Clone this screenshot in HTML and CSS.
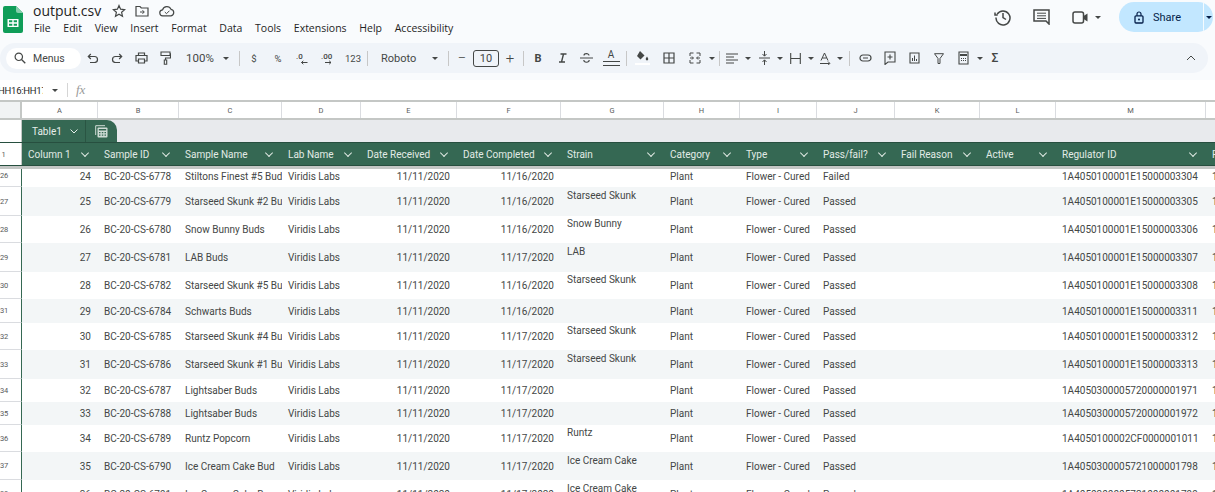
FILE: index.html
```html
<!DOCTYPE html>
<html lang="en">
<head>
<meta charset="UTF-8" />
<title>output.csv - Google Sheets</title>
<link rel="stylesheet" href="styles.css">
</head>
<body>
  <header class="topbar">
    <svg class="logo" width="20" height="27" viewBox="0 0 20 27"><path d="M2 0h11l7 7v18a2 2 0 0 1-2 2H2a2 2 0 0 1-2-2V2a2 2 0 0 1 2-2z" fill="#0f9d58"/><path d="M13 0l7 7h-5a2 2 0 0 1-2-2z" fill="#87ceac"/><path d="M4.500 13h11v8h-11z M6 14.300v2h3.300v-2z M10.700 14.300v2H14v-2z M6 17.700v2h3.300v-2z M10.700 17.700v2H14v-2z" fill="#fff" fill-rule="evenodd"/></svg>
    <div class="doc">
      <div class="doc-title">
        <span class="doc-name">output.csv</span>
        <svg class="ic-star" width="14" height="14" viewBox="0 0 14 14"><path d="M7 1.500l1.600 3.700 4 .4-3 2.700.9 4L7 10.200l-3.500 2.100.9-4-3-2.700 4-.4z" fill="none" stroke="#444746" stroke-width="1.200"/></svg>
        <svg class="ic-move" width="14" height="12" viewBox="0 0 14 12"><path d="M1 1.500h4l1.300 1.500H13v8H1z" fill="none" stroke="#444746" stroke-width="1.200"/><path d="M5 7h4M7.500 5.200L9.300 7 7.500 8.800" fill="none" stroke="#444746"/></svg>
        <svg class="ic-cloud" width="16" height="12" viewBox="0 0 16 12"><path d="M4 10.800a3 3 0 0 1-.4-6A4.500 4.500 0 0 1 12 4.300a3.300 3.300 0 0 1 0 6.500z" fill="none" stroke="#444746" stroke-width="1.200"/><path d="M5.800 7l1.700 1.700 3-3" fill="none" stroke="#444746"/></svg>
      </div>
      <nav class="menu">
        <span>File</span><span>Edit</span><span>View</span><span>Insert</span><span>Format</span><span>Data</span><span>Tools</span><span>Extensions</span><span>Help</span><span>Accessibility</span>
      </nav>
    </div>
    <div class="top-actions">
      <svg class="ic-history" width="18" height="18" viewBox="0 0 18 18"><path d="M3.200 6A7 7 0 1 1 2 9.500M1 4.500V7h2.700" fill="none" stroke="#444746" stroke-width="1.500"/><path d="M9 5v4.500l3 2" fill="none" stroke="#444746" stroke-width="1.500"/></svg>
      <svg class="ic-chat" width="17" height="16" viewBox="0 0 17 16"><path d="M1 1h15v14l-3-3H1z" fill="none" stroke="#444746" stroke-width="1.500"/><path d="M4 4.200h9M4 6.800h9M4 9.400h9" stroke="#444746"/></svg>
      <svg class="ic-video" width="17" height="13" viewBox="0 0 17 13"><rect x="1" y="1" width="10.500" height="11" rx="2" fill="none" stroke="#444746" stroke-width="1.500"/><path d="M11.500 5l4-2.500v8l-4-2.500z" fill="#444746"/></svg>
      <i class="caret ic-video-caret"></i>
      <div class="share">
        <div class="share-main">
          <svg width="10" height="13" viewBox="0 0 10 13"><rect x="1" y="4.800" width="8" height="7.200" rx="1" fill="none" stroke="#041e49" stroke-width="1.300"/><path d="M3 4.800V3a2 2 0 0 1 4 0v1.800" fill="none" stroke="#041e49" stroke-width="1.200"/><circle cx="5" cy="8.400" r="1" fill="#041e49"/></svg>
          <span>Share</span>
        </div>
        <div class="share-more"><i class="caret dark"></i></div>
      </div>
    </div>
  </header>

  <div class="toolbar">
    <div class="search">
      <svg width="12" height="12" viewBox="0 0 12 12"><circle cx="4.800" cy="4.800" r="3.700" fill="none" stroke="#444746" stroke-width="1.200"/><path d="M7.500 7.500L11.300 11.300" stroke="#444746" stroke-width="1.300"/></svg>
      <span>Menus</span>
    </div>
    <button class="tb w24"><svg width="12" height="10" viewBox="0 0 12 10"><path d="M1.500 3.500h6a3 3 0 0 1 0 6H3M3.800 1L1.300 3.500 3.800 6" fill="none" stroke="#444746" stroke-width="1.200"/></svg></button>
    <button class="tb w24"><svg width="12" height="10" viewBox="0 0 12 10"><path d="M10.500 3.500h-6a3 3 0 0 0 0 6H9M8.200 1l2.500 2.500L8.200 6" fill="none" stroke="#444746" stroke-width="1.200"/></svg></button>
    <button class="tb w24"><svg width="13" height="12" viewBox="0 0 13 12"><path d="M3.500 3.500V1h6v2.500M3.500 9H1V3.500h11V9H9.500M3.500 7h6v4h-6z" fill="none" stroke="#444746" stroke-width="1.200"/></svg></button>
    <button class="tb w24"><svg width="11" height="14" viewBox="0 0 11 14"><path d="M1 1h9v3.500H1zM10 2.800h.5V7H5.500v2M4.300 9h2.400v4.300H4.300z" fill="none" stroke="#444746" stroke-width="1.100"/></svg></button>
    <span class="tb-text zoom">100%</span>
    <i class="caret slot22"></i>
    <i class="sep"></i>
    <button class="tb w24 glyph">$</button>
    <button class="tb w24 glyph">%</button>
    <button class="tb w24"><svg width="13" height="13" viewBox="0 0 13 13"><text x="0" y="7" class="svg-num">.0</text><path d="M11.500 10.500H5.500M7.300 8.800l-1.800 1.700 1.800 1.700" fill="none" stroke="#444746"/></svg></button>
    <button class="tb w27"><svg width="14" height="13" viewBox="0 0 14 13"><text x="0" y="7" class="svg-num">.00</text><path d="M4 10.500h6M8.200 8.800l1.800 1.700-1.800 1.700" fill="none" stroke="#444746"/></svg></button>
    <button class="tb w24 glyph">123</button>
    <i class="sep"></i>
    <span class="tb-text font">Roboto</span>
    <i class="caret slot22"></i>
    <i class="sep"></i>
    <button class="tb w22 big">&minus;</button>
    <span class="size">10</span>
    <button class="tb w22 big">+</button>
    <i class="sep"></i>
    <button class="tb w24 bold">B</button>
    <button class="tb w24"><svg width="9" height="10" viewBox="0 0 9 10"><path d="M2.500 1H8.500M1 9h6M5.500 1L3.500 9" fill="none" stroke="#444746" stroke-width="1.400"/></svg></button>
    <button class="tb w24"><svg width="13" height="12" viewBox="0 0 13 12"><path d="M0 6h13" stroke="#444746"/><path d="M9 3.500C9 1 4 1 4 3.500M3.800 8c0 3 5.400 3 5.400 0" fill="none" stroke="#444746" stroke-width="1.100"/></svg></button>
    <button class="tb w26 color-a"><span>A</span><i></i></button>
    <i class="sep"></i>
    <button class="tb w26"><svg width="15" height="16" viewBox="0 0 15 16"><path d="M5 1l4.500 4.500L5.500 9.500 2 6z" fill="#444746"/><path d="M12 6.500c-1 1.500-1.300 2-1.300 2.600a1.300 1.300 0 0 0 2.600 0c0-.6-.3-1.100-1.300-2.600z" fill="#444746"/><path d="M0 13h15v2H0z" fill="#fff"/></svg></button>
    <button class="tb w28"><svg width="12" height="12" viewBox="0 0 12 12"><path d="M1 1h10v10H1zM6 1v10M1 6h10" fill="none" stroke="#444746" stroke-width="1.200"/></svg></button>
    <button class="tb w24"><svg width="12" height="12" viewBox="0 0 12 12"><path d="M4.500 1H1v3M1 8v3h3.500M7.500 1H11v3M11 8v3H7.500M1 6h3M3 4.500L4.500 6 3 7.500M11 6H8M9 4.500L7.500 6 9 7.500" fill="none" stroke="#444746"/></svg></button>
    <i class="caret slot10"></i>
    <i class="sep"></i>
    <button class="tb w20"><svg width="12" height="11" viewBox="0 0 12 11"><path d="M0 1h12M0 4h8M0 7h12M0 10h8" stroke="#444746" stroke-width="1.200"/></svg></button>
    <i class="caret slot12"></i>
    <button class="tb w20"><svg width="11" height="14" viewBox="0 0 11 14"><path d="M0 7h11M5.500 0v5M5.500 9v5M3.500 3l2 2.200 2-2.200M3.500 11l2-2.200 2 2.200" fill="none" stroke="#444746"/></svg></button>
    <i class="caret slot12"></i>
    <button class="tb w18"><svg width="11" height="11" viewBox="0 0 11 11"><path d="M.7 0v11M10.300 0v11M1 5.500h9" fill="none" stroke="#444746" stroke-width="1.100"/></svg></button>
    <i class="caret slot14"></i>
    <button class="tb w15"><svg width="12" height="13" viewBox="0 0 12 13"><path d="M1 8.500L4.500 1 8 8.500M2.300 6h4.400M0 11.500h9M8 9.500l2 2-2 1" fill="none" stroke="#444746"/></svg></button>
    <i class="caret slot14"></i>
    <i class="sep"></i>
    <button class="tb w26"><svg width="13" height="8" viewBox="0 0 13 8"><rect x="1" y="1" width="11" height="6" rx="3" fill="none" stroke="#444746" stroke-width="1.200"/><path d="M4 4h5" stroke="#444746"/></svg></button>
    <button class="tb w24"><svg width="12" height="14" viewBox="0 0 12 14"><path d="M1 1h10v10H4l-3 2.500zM6 3.500v5M3.500 6h5" fill="none" stroke="#444746" stroke-width="1.100"/></svg></button>
    <button class="tb w25"><svg width="11" height="12" viewBox="0 0 11 12"><path d="M1 1h9v10H1z" fill="none" stroke="#444746" stroke-width="1.100"/><path d="M3.500 9V6M5.500 9V3.500M7.500 9V7" stroke="#444746"/></svg></button>
    <button class="tb w24"><svg width="10" height="11" viewBox="0 0 10 11"><path d="M.5 .7h9L6 5.500V10.500H4V5.500z" fill="none" stroke="#444746"/></svg></button>
    <button class="tb w25"><svg width="11" height="14" viewBox="0 0 11 14"><path d="M1 1h9v12H1z" fill="none" stroke="#444746" stroke-width="1.100"/><path d="M2 3h7v2H2zM3 7h1v1H3zM5 7h1v1H5zM7 7h1v1H7zM3 9h1v1H3zM5 9h1v1H5zM7 9h1v1H7z" fill="#444746"/></svg></button>
    <i class="caret slot8"></i>
    <button class="tb w22 sigma">&Sigma;</button>
    <button class="tb collapse"><svg width="10" height="6" viewBox="0 0 10 6"><path d="M1 5l4-4 4 4" fill="none" stroke="#444746"/></svg></button>
  </div>

  <div class="formula">
    <div class="namebox"><span>HH16:HH17</span></div>
    <i class="caret namecaret"></i>
    <i class="fx-sep"></i>
    <span class="fx">fx</span>
  </div>

  <main class="sheet">
    <div class="row col-heads">
      <div class="corner"></div>
      <div>A</div><div>B</div><div>C</div><div>D</div><div>E</div><div>F</div><div>G</div><div>H</div><div>I</div><div>J</div><div>K</div><div>L</div><div>M</div><div></div>
    </div>
    <div class="tab-row">
      <div class="num"></div>
      <div class="table-tab">
        <span class="tab-name">Table1 <svg class="chev" width="8" height="5" viewBox="0 0 8 5"><path d="M.5 .5L4 4 7.500 .5"/></svg></span>
        <span class="tab-view"><svg width="13" height="13" viewBox="0 0 13 13"><path d="M.7 10V.7H10" fill="none" stroke="#cfdcd6"/><rect x="2.500" y="2.500" width="10" height="10" rx="1" fill="#cfdcd6"/><path d="M3.800 4h7.400v1.500H3.800z" fill="#356853"/><path d="M4 7h1.500v1.200H4zM6.800 7h1.500v1.200H6.800zM9.500 7H11v1.200H9.500zM4 9.500h1.500v1.200H4zM6.800 9.500h1.500v1.200H6.800zM9.500 9.500H11v1.200H9.500z" fill="#356853"/></svg></span>
      </div>
    </div>
    <div class="row table-head">
      <div class="num">1</div>
      <div>Column 1</div><div>Sample ID</div><div>Sample Name</div><div>Lab Name</div><div>Date Received</div><div>Date Completed</div><div>Strain</div><div>Category</div><div>Type</div><div>Pass/fail?</div><div>Fail Reason</div><div>Active</div><div>Regulator ID</div><div>R</div>
    </div>
    <div class="frozen"></div>

    <div class="row data h18"><div class="num">26</div><div class="r">24</div><div>BC-20-CS-6778</div><div>Stiltons Finest #5 Bud</div><div>Viridis Labs</div><div class="r">11/11/2020</div><div class="r">11/16/2020</div><div></div><div>Plant</div><div>Flower - Cured</div><div>Failed</div><div></div><div></div><div>1A4050100001E15000003304</div><div>1</div></div>
    <div class="row data alt h29"><div class="num">27</div><div class="r">25</div><div>BC-20-CS-6779</div><div>Starseed Skunk #2 Bu</div><div>Viridis Labs</div><div class="r">11/11/2020</div><div class="r">11/16/2020</div><div class="wrap">Starseed Skunk</div><div>Plant</div><div>Flower - Cured</div><div>Passed</div><div></div><div></div><div>1A4050100001E15000003305</div><div>1</div></div>
    <div class="row data h27"><div class="num">28</div><div class="r">26</div><div>BC-20-CS-6780</div><div>Snow Bunny Buds</div><div>Viridis Labs</div><div class="r">11/11/2020</div><div class="r">11/16/2020</div><div class="wrap">Snow Bunny</div><div>Plant</div><div>Flower - Cured</div><div>Passed</div><div></div><div></div><div>1A4050100001E15000003306</div><div>1</div></div>
    <div class="row data alt h29"><div class="num">29</div><div class="r">27</div><div>BC-20-CS-6781</div><div>LAB Buds</div><div>Viridis Labs</div><div class="r">11/11/2020</div><div class="r">11/17/2020</div><div class="wrap">LAB</div><div>Plant</div><div>Flower - Cured</div><div>Passed</div><div></div><div></div><div>1A4050100001E15000003307</div><div>1</div></div>
    <div class="row data h27"><div class="num">30</div><div class="r">28</div><div>BC-20-CS-6782</div><div>Starseed Skunk #5 Bu</div><div>Viridis Labs</div><div class="r">11/11/2020</div><div class="r">11/16/2020</div><div class="wrap">Starseed Skunk</div><div>Plant</div><div>Flower - Cured</div><div>Passed</div><div></div><div></div><div>1A4050100001E15000003308</div><div>1</div></div>
    <div class="row data alt h24"><div class="num">31</div><div class="r">29</div><div>BC-20-CS-6784</div><div>Schwarts Buds</div><div>Viridis Labs</div><div class="r">11/11/2020</div><div class="r">11/16/2020</div><div></div><div>Plant</div><div>Flower - Cured</div><div>Passed</div><div></div><div></div><div>1A4050100001E15000003311</div><div>1</div></div>
    <div class="row data h27"><div class="num">32</div><div class="r">30</div><div>BC-20-CS-6785</div><div>Starseed Skunk #4 Bu</div><div>Viridis Labs</div><div class="r">11/11/2020</div><div class="r">11/17/2020</div><div class="wrap">Starseed Skunk</div><div>Plant</div><div>Flower - Cured</div><div>Passed</div><div></div><div></div><div>1A4050100001E15000003312</div><div>1</div></div>
    <div class="row data alt h29"><div class="num">33</div><div class="r">31</div><div>BC-20-CS-6786</div><div>Starseed Skunk #1 Bu</div><div>Viridis Labs</div><div class="r">11/11/2020</div><div class="r">11/17/2020</div><div class="wrap">Starseed Skunk</div><div>Plant</div><div>Flower - Cured</div><div>Passed</div><div></div><div></div><div>1A4050100001E15000003313</div><div>1</div></div>
    <div class="row data h23"><div class="num">34</div><div class="r">32</div><div>BC-20-CS-6787</div><div>Lightsaber Buds</div><div>Viridis Labs</div><div class="r">11/11/2020</div><div class="r">11/17/2020</div><div></div><div>Plant</div><div>Flower - Cured</div><div>Passed</div><div></div><div></div><div>1A4050300005720000001971</div><div>1</div></div>
    <div class="row data alt h23"><div class="num">35</div><div class="r">33</div><div>BC-20-CS-6788</div><div>Lightsaber Buds</div><div>Viridis Labs</div><div class="r">11/11/2020</div><div class="r">11/17/2020</div><div></div><div>Plant</div><div>Flower - Cured</div><div>Passed</div><div></div><div></div><div>1A4050300005720000001972</div><div>1</div></div>
    <div class="row data h27"><div class="num">36</div><div class="r">34</div><div>BC-20-CS-6789</div><div>Runtz Popcorn</div><div>Viridis Labs</div><div class="r">11/11/2020</div><div class="r">11/17/2020</div><div class="wrap">Runtz</div><div>Plant</div><div>Flower - Cured</div><div>Passed</div><div></div><div></div><div>1A4050100002CF0000001011</div><div>1</div></div>
    <div class="row data alt h28"><div class="num">37</div><div class="r">35</div><div>BC-20-CS-6790</div><div>Ice Cream Cake Bud</div><div>Viridis Labs</div><div class="r">11/11/2020</div><div class="r">11/17/2020</div><div class="wrap">Ice Cream Cake</div><div>Plant</div><div>Flower - Cured</div><div>Passed</div><div></div><div></div><div>1A4050300005721000001798</div><div>1</div></div>
    <div class="row data h28"><div class="num">38</div><div class="r">36</div><div>BC-20-CS-6791</div><div>Ice Cream Cake Bu</div><div>Viridis Labs</div><div class="r">11/11/2020</div><div class="r">11/17/2020</div><div class="wrap">Ice Cream Cake</div><div>Plant</div><div>Flower - Cured</div><div>Passed</div><div></div><div></div><div>1A4050300005721000001799</div><div>1</div></div>
  </main>
</body>
</html>
```

FILE: styles.css
```css
html, body {
  margin: 0;
  height: 100%;
  overflow: hidden;
}
body {
  width: 1215px;
  height: 492px;
  background-color: #f9fbfd;
  color: #444746;
  font-family: "Roboto", "Liberation Sans", sans-serif;
  font-size: 10px;
}
svg { display: block; flex: none; }

/* Top bar */
.topbar {
  height: 43px;
  display: flex;
  box-sizing: border-box;
}
.logo {
  margin: 6px 0 0 3px;
}
.doc {
  margin-left: 10px;
}
.doc-title {
  height: 21px;
  display: flex;
  align-items: center;
}
.doc-name {
  font-family: "Open Sans", sans-serif;
  font-size: 14px;
  color: #1f1f1f;
  width: 79px;
}
.ic-move { margin-left: 9px; }
.ic-cloud { margin-left: 10px; }
.menu {
  display: flex;
  gap: 12.7px;
  margin-left: 1px;
  font-family: "Open Sans", sans-serif;
  font-size: 10.5px;
  color: #1f1f1f;
  line-height: 14px;
}
.top-actions {
  margin-left: auto;
  display: flex;
  align-items: center;
  height: 34px;
}
.ic-chat { margin-left: 21px; }
.ic-video { margin-left: 22px; }
.ic-video-caret { margin-left: 6px; }
.share {
  margin: 0 2px 0 18px;
  display: flex;
  width: 94px;
  height: 30px;
  border-radius: 15px;
  background-color: #c2e7ff;
  color: #041e49;
  font-size: 11px;
  overflow: hidden;
}
.share-main {
  width: 69px;
  padding-left: 15px;
  display: flex;
  align-items: center;
  gap: 9px;
  border-right: 1px solid #f4fbff;
}
.share-more {
  flex: 1;
  display: flex;
  align-items: center;
  justify-content: center;
}

/* Carets */
.caret {
  display: block;
  flex: none;
  width: 0;
  height: 0;
  border-left: 3px solid transparent;
  border-right: 3px solid transparent;
  border-top: 3px solid #444746;
}
.caret.dark { border-top-color: #041e49; }
.slot22 { margin: 0 8px; }
.slot14 { margin: 0 4px; }
.slot12 { margin: 0 3px; }
.slot10 { margin: 0 2px; }
.slot8 { margin: 0 1px; }

/* Toolbar */
.toolbar {
  height: 30px;
  width: 1208px;
  padding-left: 6px;
  box-sizing: border-box;
  border-radius: 15px;
  background-color: #f0f4f9;
  display: flex;
  align-items: center;
}
.search {
  width: 75px;
  height: 21px;
  box-sizing: border-box;
  border-radius: 11px;
  background-color: #fff;
  padding-left: 8px;
  display: flex;
  align-items: center;
  gap: 7px;
  font-size: 10.5px;
}
.tb {
  flex: none;
  height: 20px;
  padding: 0;
  border: none;
  background: none;
  color: #444746;
  font-family: inherit;
  display: flex;
  align-items: center;
  justify-content: center;
}
.w15 { width: 15px; }
.w18 { width: 18px; }
.w20 { width: 20px; }
.w22 { width: 22px; }
.w24 { width: 24px; }
.w25 { width: 25px; }
.w26 { width: 26px; }
.w27 { width: 27px; }
.w28 { width: 28px; }
.glyph { font-size: 9.5px; }
.big { font-size: 15px; font-weight: 300; }
.bold { font-size: 11px; font-weight: 700; }
.sigma { font-size: 12px; font-weight: 500; }
.svg-num { font-size: 8px; font-weight: 500; fill: #444746; }
.tb-text {
  flex: none;
  font-size: 11px;
  box-sizing: border-box;
}
.zoom { width: 38px; padding-left: 9px; font-size: 11.5px; }
.font { width: 54px; padding-left: 11px; }
.size {
  flex: none;
  box-sizing: border-box;
  width: 26px;
  height: 17px;
  line-height: 15px;
  border: 1px solid #444746;
  border-radius: 3px;
  text-align: center;
  font-size: 11px;
}
.sep {
  display: block;
  flex: none;
  width: 1px;
  height: 15px;
  margin: 0 2px;
  background-color: #c7c7c7;
}
.color-a {
  flex-direction: column;
  font-size: 10px;
  line-height: 10px;
}
.color-a i {
  display: block;
  width: 17px;
  height: 3px;
  margin-top: 1px;
  border-top: 1px solid #444746;
  border-bottom: 1px solid #444746;
}
.collapse {
  margin-left: auto;
  width: 34px;
}

/* Formula bar */
.formula {
  margin-top: 7px;
  height: 20px;
  background-color: #fff;
  display: flex;
  align-items: center;
}
.namebox {
  width: 43px;
  overflow: hidden;
  white-space: nowrap;
  font-size: 9.5px;
  letter-spacing: -0.25px;
  color: #1f1f1f;
}
.namebox span { margin-left: -2px; display: block; }
.namecaret { margin-left: 9px; }
.fx-sep {
  display: block;
  width: 1px;
  height: 14px;
  margin-left: 9px;
  background-color: #d5d5d5;
}
.fx {
  margin-left: 8px;
  font-family: "Liberation Serif", serif;
  font-style: italic;
  font-size: 13px;
  color: #9a9a9a;
}

/* Sheet */
.sheet {
  border-top: 2px solid #c4c7c5;
  background-color: #fff;
}
.row {
  display: grid;
  grid-template-columns: 22px 76px 81px 103px 79px 96px 104px 103px 76px 77px 78px 85px 76px 150px 40px;
}
.row > div {
  min-width: 0;
  box-sizing: border-box;
  padding: 0 6px;
  white-space: nowrap;
  overflow: hidden;
  display: flex;
  align-items: center;
}

.col-heads {
  height: 18px;
  border-bottom: 2px solid #c4c7c5;
  box-sizing: border-box;
  font-size: 7.5px;
  color: #575a5a;
}
.col-heads > div {
  justify-content: center;
  border-right: 1px solid #dadce0;
}
.col-heads > .corner {
  background-color: #f1f3f4;
  border-right: 2px solid #c4c7c5;
}

.tab-row {
  height: 22px;
  display: flex;
  background-color: #e8eaed;
}
.num {
  width: 22px;
  flex: none;
  background-color: #fff;
  border-right: 1px solid #c4c7c5;
  box-sizing: border-box;
}
.table-tab {
  width: 95px;
  display: flex;
  background-color: #356853;
  border-radius: 0 10px 0 0;
  color: #e6eeea;
  font-size: 10px;
}
.tab-name {
  width: 64px;
  box-sizing: border-box;
  padding-left: 10px;
  display: flex;
  align-items: center;
  gap: 8px;
  border-right: 1px solid #2a5543;
}
.tab-view {
  flex: 1;
  display: flex;
  align-items: center;
  justify-content: center;
}
.chev {
  fill: none;
  stroke: #e6eeea;
}

.table-head {
  height: 24px;
  border-top: 1px solid #274f3f;
  border-bottom: 1px solid #274f3f;
  box-sizing: border-box;
  background-color: #356853;
  color: #e2ebe6;
  font-size: 10px;
}
.table-head > div {
  position: relative;
}
.table-head > div:not(.num)::after {
  content: "";
  position: absolute;
  right: 10px;
  top: 7px;
  width: 5px;
  height: 5px;
  border-right: 1px solid #e2ebe6;
  border-bottom: 1px solid #e2ebe6;
  transform: rotate(45deg) scale(0.95);
}
.table-head > .num {
  padding: 0 14px 0 0;
  justify-content: center;
  background-color: #fff;
  color: #575a5a;
  font-size: 7.5px;
}

.frozen {
  height: 3px;
  background-color: #c4c7c5;
}

.data {
  color: #444746;
  box-sizing: border-box;
}
.data.alt > div:not(.num) { background-color: #f3f6f7; }
.data > .num {
  padding: 0;
  font-size: 7.5px;
  color: #575a5a;
  border-right: 1px solid #356853;
  border-bottom: 1px solid #dadce0;
  justify-content: flex-start;
  letter-spacing: -0.2px;
}
.data > .r { justify-content: flex-end; padding-right: 7px; }
.data > .wrap { padding-bottom: 12px; }
.h18 { height: 18px; }
.row.h18 > div { padding-bottom: 4px; }
.h23 { height: 23px; }
.h24 { height: 24px; }
.h27 { height: 27px; }
.h28 { height: 28px; }
.h29 { height: 29px; }
```
